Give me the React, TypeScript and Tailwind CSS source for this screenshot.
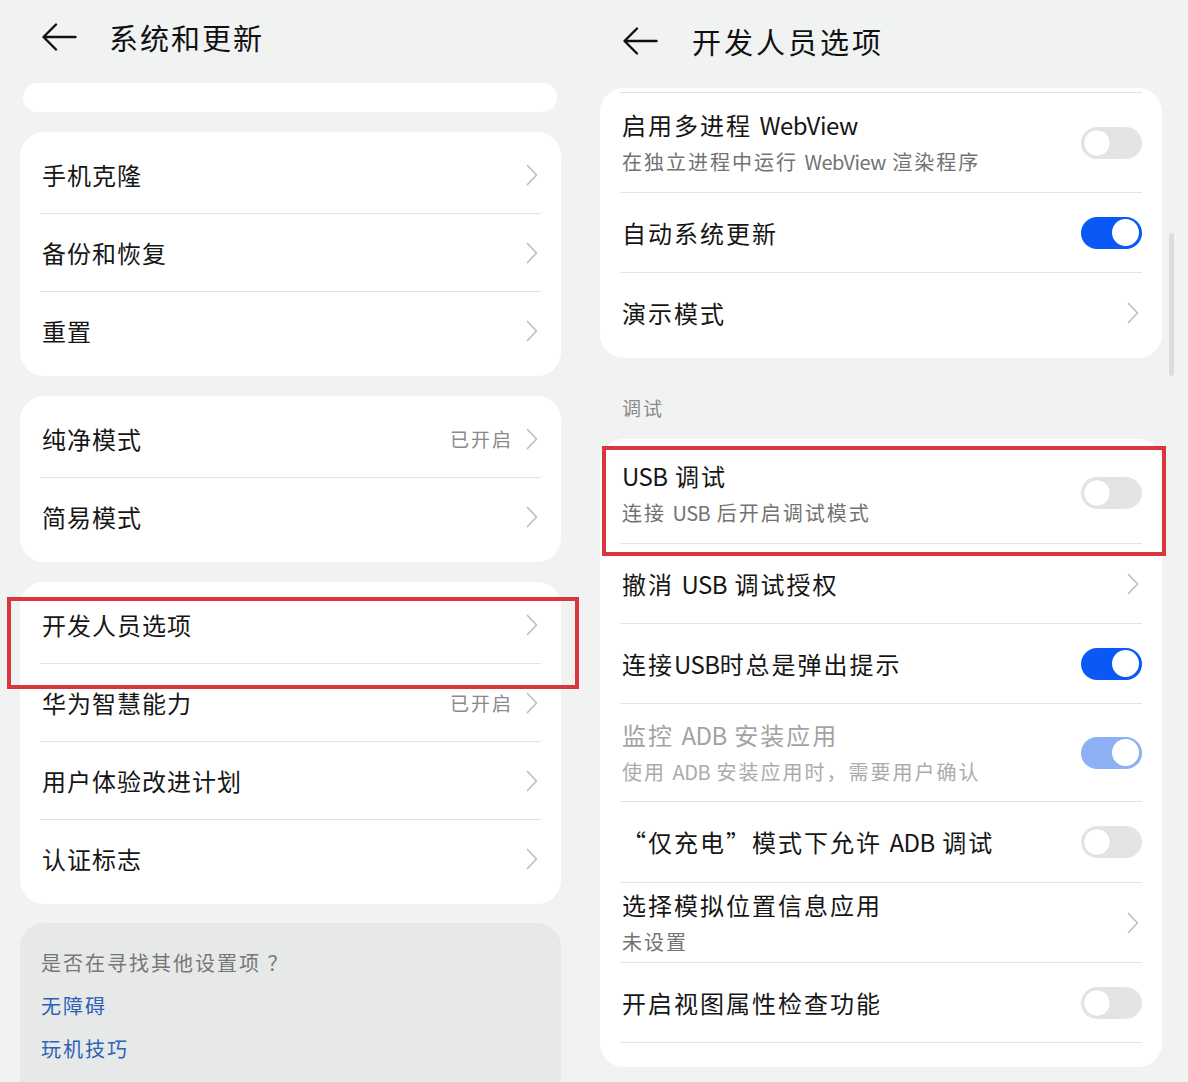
import React from "react";

const Chevron = () => (
  <svg width="12" height="22" viewBox="0 0 12 22" fill="none">
    <path d="M1.5 1.5 L10.5 11 L1.5 20.5" stroke="#c2c2c2" strokeWidth="1.8" strokeLinecap="round" strokeLinejoin="round" />
  </svg>
);

const BackArrow = () => (
  <svg width="35" height="28" viewBox="0 0 35 28" fill="none">
    <path d="M33.5 14 H2 M14 1.5 L1.5 14 L14 26.5" stroke="#111" strokeWidth="2.4" strokeLinecap="round" strokeLinejoin="round" />
  </svg>
);

// latin runs in the reference are much narrower than the CJK glyphs
const Mixed = ({ text }: { text: string }) => (
  <>
    {text.split(/([A-Za-z]+)/).map((part, i) =>
      /^[A-Za-z]+$/.test(part) ? (
        <span key={i} className="tracking-[-0.5px]">{part}</span>
      ) : (
        <React.Fragment key={i}>{part}</React.Fragment>
      )
    )}
  </>
);

type ToggleProps = { on?: boolean; dim?: boolean };

const Toggle = ({ on, dim }: ToggleProps) => {
  if (on) {
    return (
      <div className={`w-[61px] h-[32px] rounded-full flex items-center justify-end pr-[3px] ${dim ? "bg-[#8eb1f5]" : "bg-[#0a59f7]"}`}>
        <div className="w-[27px] h-[27px] rounded-full bg-white" />
      </div>
    );
  }
  return (
    <div className="w-[61px] h-[32px] rounded-full bg-[#e4e4e4] flex items-center pl-[2px]">
      <div className="w-[28px] h-[28px] rounded-full bg-white border border-[#dadada]" />
    </div>
  );
};

type LeftRowProps = { label: string; value?: string; last?: boolean };

const LeftRow = ({ label, value, last }: LeftRowProps) => (
  <div className={`mx-[20px] h-[78px] flex items-center justify-between ${last ? "" : "border-b border-[#e3e3e3]"}`}>
    <span className="pl-[2px] text-[24px] leading-[30px] tracking-[1px] text-[#161616]">{label}</span>
    <div className="flex items-center gap-[13px] pr-[3px]">
      {value && <span className="text-[19px] leading-[24px] tracking-[2px] text-[#8a8a8a]">{value}</span>}
      <Chevron />
    </div>
  </div>
);

type RightRowProps = {
  title: string;
  sub?: string;
  h: string;
  right: React.ReactNode;
  disabled?: boolean;
  last?: boolean;
};

const RightRow = ({ title, sub, h, right, disabled, last }: RightRowProps) => (
  <div className={`mx-[20px] ${h} flex items-center justify-between ${last ? "" : "border-b border-[#e3e3e3]"}`}>
    <div className="flex flex-col gap-[9px] pl-[2px]">
      <span className={`text-[24px] leading-[30px] tracking-[2px] ${disabled ? "text-[#a3a3a3]" : "text-[#161616]"}`}>
        <Mixed text={title} />
      </span>
      {sub && (
        <span className={`text-[20px] leading-[26px] tracking-[2px] ${disabled ? "text-[#ababab]" : "text-[#727272]"}`}>
          <Mixed text={sub} />
        </span>
      )}
    </div>
    <div className="flex items-center">{right}</div>
  </div>
);

const ChevronBox = () => (
  <div className="pr-[3px]">
    <Chevron />
  </div>
);

export default function App() {
  return (
    <div className="relative flex w-[1188px] h-[1082px] overflow-hidden bg-[#f1f3f3] font-['Noto_Sans_CJK_SC','Liberation_Sans',sans-serif]">
      {/* left screen */}
      <div className="w-[580px] px-[20px]">
        <div className="h-[74px] flex items-center">
          <div className="ml-[22px]">
            <BackArrow />
          </div>
          <h1 className="ml-[32px] text-[29px] leading-[36px] tracking-[2px] text-[#111]">系统和更新</h1>
        </div>
        <div className="mt-[9px] mx-[3px] h-[29px] rounded-[15px] bg-white" />

        <div className="mt-[20px] w-[541px] rounded-[24px] bg-white pt-[4px] pb-[6px]">
          <LeftRow label="手机克隆" />
          <LeftRow label="备份和恢复" />
          <LeftRow label="重置" last />
        </div>

        <div className="mt-[20px] w-[541px] rounded-[24px] bg-white pt-[4px] pb-[6px]">
          <LeftRow label="纯净模式" value="已开启" />
          <LeftRow label="简易模式" last />
        </div>

        <div className="mt-[20px] w-[541px] rounded-[24px] bg-white pt-[4px] pb-[6px]">
          <LeftRow label="开发人员选项" />
          <LeftRow label="华为智慧能力" value="已开启" />
          <LeftRow label="用户体验改进计划" />
          <LeftRow label="认证标志" last />
        </div>

        <div className="mt-[19px] w-[541px] h-[180px] rounded-[24px] bg-[#e7e9e9] px-[21px] pt-[26px] flex flex-col">
          <span className="text-[20px] leading-[28px] tracking-[2px] text-[#777]">是否在寻找其他设置项 ？</span>
          <span className="mt-[15px] text-[20px] leading-[28px] tracking-[2px] text-[#2a62b6]">无障碍</span>
          <span className="mt-[15px] text-[20px] leading-[28px] tracking-[2px] text-[#2a62b6]">玩机技巧</span>
        </div>
      </div>

      {/* right screen */}
      <div className="w-[608px] pl-[20px]">
        <div className="h-[82px] flex items-center">
          <div className="ml-[23px]">
            <BackArrow />
          </div>
          <h1 className="ml-[34px] text-[29px] leading-[36px] tracking-[3px] text-[#111]">开发人员选项</h1>
        </div>

        <div className="mt-[6px] w-[562px] rounded-[24px] bg-white pt-[4px] pb-[5px]">
          <div className="mx-[20px] h-px bg-[#e3e3e3]" />
          <RightRow title="启用多进程 WebView" sub="在独立进程中运行 WebView 渲染程序" h="h-[100px]" right={<Toggle />} />
          <RightRow title="自动系统更新" h="h-[80px]" right={<Toggle on />} />
          <RightRow title="演示模式" h="h-[80px]" right={<ChevronBox />} last />
        </div>

        <div className="h-[81px] pt-[39px] pl-[22px]">
          <span className="text-[19px] leading-[22px] tracking-[2px] text-[#8a8a8a]">调试</span>
        </div>

        <div className="w-[562px] rounded-[24px] bg-white pt-[4px]">
          <RightRow title="USB 调试" sub="连接 USB 后开启调试模式" h="h-[101px]" right={<Toggle />} />
          <RightRow title="撤消 USB 调试授权" h="h-[80px]" right={<ChevronBox />} />
          <RightRow title="连接USB时总是弹出提示" h="h-[80px]" right={<Toggle on />} />
          <RightRow title="监控 ADB 安装应用" sub="使用 ADB 安装应用时，需要用户确认" h="h-[98px]" right={<Toggle on dim />} disabled />
          <RightRow title="“仅充电”模式下允许 ADB 调试" h="h-[81px]" right={<Toggle />} />
          <RightRow title="选择模拟位置信息应用" sub="未设置" h="h-[80px]" right={<ChevronBox />} />
          <RightRow title="开启视图属性检查功能" h="h-[80px]" right={<Toggle />} />
          <div className="h-[24px]" />
        </div>
      </div>

      {/* scrollbar */}
      <div className="absolute left-[1169px] top-[233px] w-[5px] h-[143px] rounded-full bg-[#dcdede]" />

      {/* highlight boxes */}
      <div className="absolute left-[7px] top-[597px] w-[572px] h-[92px] border-[4px] border-[#d9363f]" />
      <div className="absolute left-[602px] top-[446px] w-[564px] h-[110px] border-[4px] border-[#d9363f]" />
    </div>
  );
}
